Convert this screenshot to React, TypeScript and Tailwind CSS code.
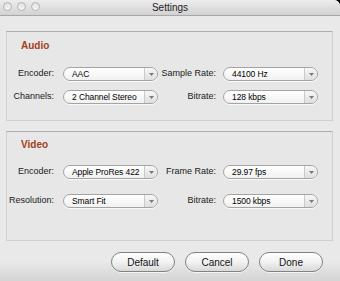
import React from 'react';

function Select({ value }: { value: string }) {
  return (
    <div className="flex h-[14px] w-[95px] items-stretch overflow-hidden rounded-full border border-[#a3a3a3] bg-gradient-to-b from-white to-[#f1f1f1] shadow-[0_1px_0_rgba(255,255,255,0.8)]">
      <span className="flex-1 overflow-hidden whitespace-nowrap pl-[8px] text-[8.5px] leading-[12px] tracking-[-0.1px] text-black">{value}</span>
      <span className="flex w-[13px] shrink-0 items-center justify-center rounded-r-full border-l border-[#c9c9c9] bg-gradient-to-b from-[#f7f7f7] to-[#dedede]">
        <svg width="5" height="3" viewBox="0 0 5 3">
          <path d="M0 0 L5 0 L2.5 3 Z" fill="#7a7a7a" />
        </svg>
      </span>
    </div>
  );
}

function Row({ l1, v1, l2, v2, className }: { l1: string; v1: string; l2: string; v2: string; className: string }) {
  return (
    <div className={'flex items-center ' + className}>
      <span className="w-[47px] text-right text-[9px] text-[#1a1a1a]">{l1}</span>
      <div className="ml-[9px]">
        <Select value={v1} />
      </div>
      <span className="w-[58px] text-right text-[9px] text-[#1a1a1a]">{l2}</span>
      <div className="ml-[7px]">
        <Select value={v2} />
      </div>
    </div>
  );
}

function Panel({ title, children, h }: { title: string; children: React.ReactNode; h: string }) {
  return (
    <div className={'w-[327px] border border-[#d0d0d0] border-t-[#adadad] bg-[#e7e7e7] ' + h}>
      <div className="pl-[14px] text-[10px] font-bold leading-[12px] text-[#a3401c]">{title}</div>
      {children}
    </div>
  );
}

export default function App() {
  return (
    <div className="bg-black w-[340px] h-[281px]">
      <div className="relative flex h-[281px] w-[340px] flex-col overflow-hidden rounded-tr-[6px] bg-[linear-gradient(to_bottom,#e9e9e9_0%,#e9e9e9_93%,#d4d4d4_100%)] font-['Liberation_Sans',Arial,sans-serif]">
        <div className="relative flex h-[16px] items-center border-b border-[#a8a8a8] bg-gradient-to-b from-[#ededed] to-[#d2d2d2]">
          <div className="absolute left-[3px] top-[2px] flex gap-[5px]">
            {[0, 1, 2].map((i) => (
              <span key={i} className="h-[9px] w-[9px] rounded-full border border-[#b3b3b3] bg-gradient-to-b from-[#e0e0e0] to-[#f5f5f5]" />
            ))}
          </div>
          <span className="w-full text-center text-[10px] leading-[14px] text-[#222]">Settings</span>
        </div>

        <div className="flex flex-col pl-[6px] pt-[15px]">
          <Panel title="Audio" h="h-[90px] pt-[8px]">
            <Row className="mt-[15px]" l1="Encoder:" v1="AAC" l2="Sample Rate:" v2="44100 Hz" />
            <Row className="mt-[9px]" l1="Channels:" v1="2 Channel Stereo" l2="Bitrate:" v2="128 kbps" />
          </Panel>
          <div className="mt-[10px]">
            <Panel title="Video" h="h-[110px] pt-[7px]">
              <Row className="mt-[14px]" l1="Encoder:" v1="Apple ProRes 422" l2="Frame Rate:" v2="29.97 fps" />
              <Row className="mt-[15px]" l1="Resolution:" v1="Smart Fit" l2="Bitrate:" v2="1500 kbps" />
            </Panel>
          </div>
        </div>

        <div className="mt-[11px] flex justify-end gap-[10px] pr-[17px]">
          {['Default', 'Cancel', 'Done'].map((b) => (
            <button
              key={b}
              className="h-[20px] w-[64px] rounded-full border border-[#828282] bg-gradient-to-b from-white via-[#f2f2f2] to-[#d9d9d9] text-[10px] text-[#111] shadow-[0_1px_0_rgba(255,255,255,0.7)]"
            >
              {b}
            </button>
          ))}
        </div>
      </div>
    </div>
  );
}
